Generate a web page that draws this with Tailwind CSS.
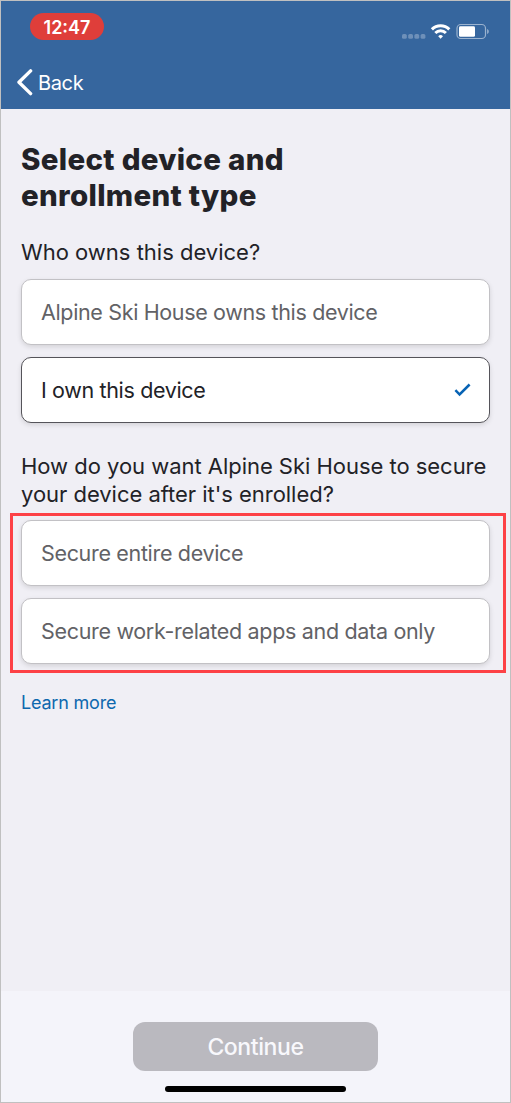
<!DOCTYPE html>
<html lang="en">
<head>
<meta charset="utf-8">
<title>Select device and enrollment type</title>
<script src="https://cdn.jsdelivr.net/npm/@tailwindcss/browser@4"></script>
</head>
<body class="font-['Inter',sans-serif] antialiased">
<div class="relative flex h-[1103px] w-[511px] flex-col overflow-hidden border border-[#c0c0c0] bg-[#f0eff5] whitespace-nowrap">
  <header class="flex h-[108px] shrink-0 flex-col bg-[#36669e] text-white">
    <div class="flex h-[52px] items-start justify-between pt-[12px] pl-[29px] pr-[20px]">
      <div class="flex h-[27px] w-[74px] items-center justify-center rounded-full bg-[#df3e3a] pt-[2px] text-[18px] font-semibold">12:47</div>
      <svg class="mt-[8px]" width="88" height="20" viewBox="0 0 88 20" fill="none">
        <g fill="#fff" fill-opacity=".28"><rect x="0" y="13" width="4.800" height="4.800" rx="1.6"/><rect x="6.200" y="13" width="4.800" height="4.800" rx="1.6"/><rect x="12.400" y="13" width="4.800" height="4.800" rx="1.6"/><rect x="18.600" y="13" width="4.800" height="4.800" rx="1.6"/></g>
        <g stroke="#fff" stroke-width="3"><path d="M29.9 8.4a12.2 12.2 0 0 1 17.4 0"/><path d="M33.3 12a7.6 7.6 0 0 1 10.6 0"/></g>
        <path d="M38.6 17.8l-2.4-2.6a3.5 3.5 0 0 1 4.8 0z" fill="#fff"/>
        <rect x="55" y="3.5" width="28.5" height="14" rx="3.8" stroke="#fff" stroke-opacity=".5" stroke-width="1.2"/>
        <rect x="57" y="5.3" width="16" height="10.5" rx="1.4" fill="#fff"/>
        <path d="M85.2 8.1c2 .8 2 4.200 0 5z" fill="#fff" fill-opacity=".55"/>
      </svg>
    </div>
    <div class="flex h-[56px] items-center pt-[2px] pl-[15px]">
      <svg width="18" height="28" viewBox="0 0 18 28" fill="none" stroke="#fff" stroke-width="3.4" stroke-linecap="round" stroke-linejoin="round"><path d="M14.600 2.900L3 14.200l11.600 11.400"/></svg>
      <span class="ml-[4px] pt-px text-[20px] leading-[26px] tracking-[-0.35px]">Back</span>
    </div>
  </header>

  <main class="flex flex-1 flex-col px-[20px] pt-[32px] text-[22px] text-[#222227]">
    <h1 class="text-[29.5px] leading-[36px] font-extrabold tracking-[0.3px]">Select device and<br>enrollment type</h1>
    <p class="mt-[25px] leading-[28px]">Who owns this device?</p>
    <div class="mt-[13px] flex flex-col gap-[12px] text-[21.5px]">
      <div class="flex h-[66px] w-[469px] items-center rounded-[10px] border border-[#c2c1c5] bg-white px-[19px] text-[#626266] shadow-[0_2px_5px_rgba(0,0,0,0.12)]"><span class="tracking-[-0.35px]">Alpine Ski House owns this device</span></div>
      <div class="flex h-[66px] w-[469px] items-center justify-between rounded-[10px] border border-[#55545a] bg-white pr-[18px] pl-[19px] shadow-[0_2px_5px_rgba(0,0,0,0.12)]"><span class="tracking-[-0.35px]">I own this device</span>
        <svg width="17" height="14" viewBox="0 0 17 14" fill="none" stroke="#0763b4" stroke-width="2.500"><path d="M1.400 7.200l4.200 4.300L15.600 1.500"/></svg></div>
    </div>
    <p class="mt-[30px] h-[55px] leading-[27.5px] tracking-[-0.03px]"><span>How do you want Alpine Ski House to secure</span><br><span>your device after it's enrolled?</span></p>
    <div class="-ml-[11px] mt-[5px] flex h-[160px] w-[496px] flex-col gap-[12px] border-[3px] border-[#fd4146] px-[8px] pt-[4px] text-[21.5px] text-[#626266]">
      <div class="flex h-[66px] w-[469px] shrink-0 items-center rounded-[10px] border border-[#c2c1c5] bg-white px-[19px] shadow-[0_2px_5px_rgba(0,0,0,0.12)]"><span class="tracking-[-0.33px]">Secure entire device</span></div>
      <div class="flex h-[66px] w-[469px] shrink-0 items-center rounded-[10px] border border-[#c2c1c5] bg-white px-[19px] shadow-[0_2px_5px_rgba(0,0,0,0.12)]"><span class="tracking-[-0.32px]">Secure work-related apps and data only</span></div>
    </div>
    <a class="mt-[18px] text-[18px] leading-[24px] tracking-[-0.2px] text-[#0d68ae]">Learn more</a>
  </main>

  <footer class="flex h-[111px] shrink-0 flex-col items-center bg-[#f4f4fa] pt-[31px]">
    <button class="h-[49px] w-[245px] rounded-[12px] bg-[#bab9bf] pt-[2px] text-[23px] font-medium tracking-[-0.4px] text-[#f8f8fc]">Continue</button>
    <div class="mt-[15px] h-[6px] w-[181px] rounded-full bg-black"></div>
  </footer>
</div>
</body>
</html>
